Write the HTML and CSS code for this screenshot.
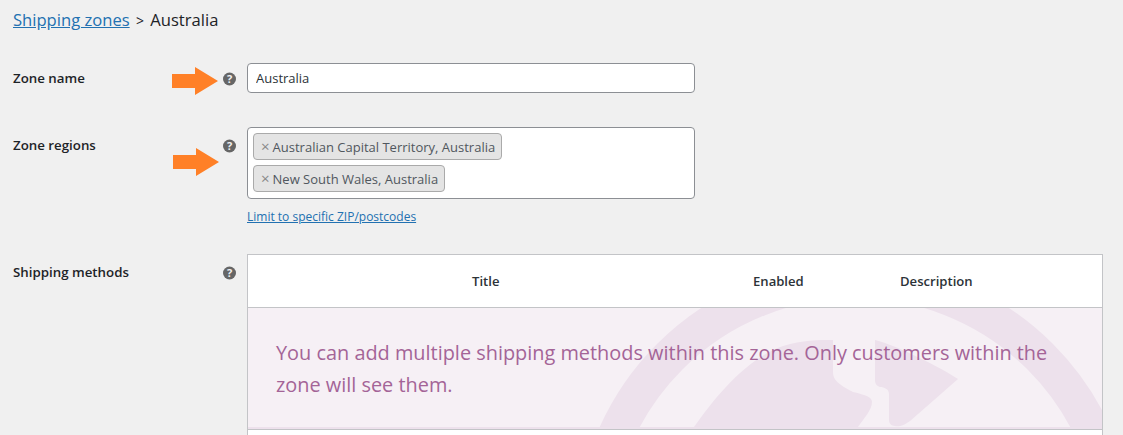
FILE: index.html
```html
<!DOCTYPE html>
<html lang="en">

<head>
  <meta charset="UTF-8">
  <title>Shipping zones</title>
  <link rel="stylesheet" href="styles.css">
</head>

<body>
  <h2 class="crumbs"><a href="#">Shipping zones</a> <span class="sep">&gt;</span> Australia</h2>

  <div class="field field-name">
    <div class="label">Zone name</div>
    <div class="tip">
      <svg class="arrow" viewBox="0 0 46 28"><path d="M0 7H23V0L46 14 23 28V21H0Z" /></svg>
      <svg class="help" viewBox="0 0 14 14"><circle cx="6.5" cy="7" r="6.5" /><text x="6.5" y="10.8" text-anchor="middle">?</text></svg>
    </div>
    <div class="control"><input class="text-input" type="text" value="Australia"></div>
  </div>

  <div class="field field-regions">
    <div class="label">Zone regions</div>
    <div class="tip">
      <svg class="arrow arrow-low" viewBox="0 0 46 28"><path d="M0 7H23V0L46 14 23 28V21H0Z" /></svg>
      <svg class="help" viewBox="0 0 14 14"><circle cx="6.5" cy="7" r="6.5" /><text x="6.5" y="10.8" text-anchor="middle">?</text></svg>
    </div>
    <div class="control">
      <div class="select-box">
        <span class="chip"><i>×</i>Australian Capital Territory, Australia</span>
        <span class="chip"><i>×</i>New South Wales, Australia</span>
      </div>
      <a class="limit" href="#">Limit to specific ZIP/postcodes</a>
    </div>
  </div>

  <div class="field field-methods">
    <div class="label">Shipping methods</div>
    <div class="tip">
      <svg class="help" viewBox="0 0 14 14"><circle cx="6.5" cy="7" r="6.5" /><text x="6.5" y="10.8" text-anchor="middle">?</text></svg>
    </div>
    <div class="methods">
      <div class="methods-head">
        <span class="col-title">Title</span>
        <span class="col-enabled">Enabled</span>
        <span class="col-desc">Description</span>
      </div>
      <div class="blank">
        <svg class="watermark" viewBox="0 0 854 119">
          <circle cx="607" cy="234" r="262" />
          <path class="fill" d="M446 119C470 85 500 50 535 38 555 32 570 32 585 32V64C585 72 590 76 605 84 618 87 624 89 624 94 624 102 616 110 610 119Z" />
          <path class="fill" d="M627 32C650 38 690 58 710 71L662 113C655 118 650 119 647 118 643 118 641 115 641 112V86C641 81 636 79 632 79 629 78 627 76 627 72Z" />
        </svg>
        <p>You can add multiple shipping methods within this zone. Only customers within the zone will see them.</p>
      </div>
      <div class="methods-foot"></div>
    </div>
  </div>
</body>

</html>
```

FILE: styles.css
```css
:root {
  --bg: #f0f0f0;
  --text: #1d2327;
  --link: #2271b1;
  --border: #c3c4c7;
  --input: #8c8f94;
  --woo: #a46497;
  --woo-mark: #ede1ec;
}

html, body {
  margin: 0;
  height: 435px;
  overflow: hidden;
}

body {
  padding: 0 0 0 13px;
  background: var(--bg);
  color: var(--text);
  font-family: "Open Sans", "Noto Sans", sans-serif;
  font-size: 13px;
}

a {
  color: var(--link);
}

.crumbs {
  margin: 0;
  padding-top: 9px;
  font-size: 16.6px;
  line-height: 22px;
  font-weight: 500;
}

.crumbs .sep {
  font-size: 14px;
  margin: 0 2px;
}

.field {
  display: grid;
  grid-template-columns: 210px 24px 1fr;
}

.field-name {
  margin-top: 31px;
}

.field-regions {
  margin-top: 34px;
}

.field-methods {
  margin-top: 29px;
}

.label {
  font-weight: 600;
  font-size: 13.3px;
  line-height: 18px;
  padding-top: 6px;
}

.field-regions .label,
.field-methods .label {
  padding-top: 9px;
}

.tip {
  position: relative;
  height: 14px;
  padding-top: 9px;
}

.field-regions .tip,
.field-methods .tip {
  padding-top: 12px;
}

.help {
  display: block;
  width: 14px;
  height: 14px;
}

.help circle {
  fill: #666;
}

.help text {
  fill: #f0f0f0;
  font-size: 11px;
  font-weight: 700;
  font-family: "Open Sans", sans-serif;
}

.arrow {
  position: absolute;
  left: -51px;
  top: 4px;
  width: 46px;
  height: 28px;
  fill: #ff8027;
}

.arrow-low {
  top: 21px;
  left: -50px;
}

.control {
  width: 448px;
}

.text-input {
  display: block;
  box-sizing: border-box;
  width: 100%;
  height: 30px;
  padding: 0 8px;
  border: 1px solid var(--input);
  border-radius: 4px;
  background: #fff;
  color: #2c3338;
  font: 13px "Open Sans", sans-serif;
}

.select-box {
  box-sizing: border-box;
  display: flex;
  flex-direction: column;
  align-items: flex-start;
  gap: 5px;
  height: 72px;
  padding: 5px;
  border: 1px solid var(--input);
  border-radius: 4px;
  background: #fff;
}

.chip {
  box-sizing: border-box;
  height: 27px;
  line-height: 25px;
  padding: 0 6px 0 7px;
  border: 1px solid #aaa;
  border-radius: 4px;
  background: #e4e4e4;
  color: #50575e;
  font-size: 13px;
  white-space: nowrap;
}

.chip i {
  font-style: normal;
  font-size: 15px;
  color: #888;
  margin-right: 3px;
}

.limit {
  display: inline-block;
  margin-top: 10px;
  font-size: 12px;
  line-height: 16px;
}

.methods {
  width: 856px;
  box-sizing: border-box;
  border: 1px solid var(--border);
  border-bottom: 0;
  background: #fff;
}

.methods-head {
  display: grid;
  grid-template-columns: 476px 150px 1fr;
  height: 52px;
  line-height: 52px;
  font-weight: 600;
  font-size: 13.1px;
  border-bottom: 1px solid var(--border);
  color: #2c3338;
}

.col-title {
  padding-left: 224px;
}

.col-enabled {
  padding-left: 29px;
}

.col-desc {
  padding-left: 26px;
}

.blank {
  position: relative;
  height: 121px;
  overflow: hidden;
  background: #f6f0f5;
  border-bottom: 1px solid var(--border);
  box-shadow: inset 0 -2px 0 var(--woo-mark);
}

.watermark {
  position: absolute;
  left: 0;
  top: 0;
  width: 854px;
  height: 119px;
}

.watermark circle {
  fill: none;
  stroke: var(--woo-mark);
  stroke-width: 36;
}

.watermark .fill {
  fill: var(--woo-mark);
}

.blank p {
  position: relative;
  margin: 0;
  padding: 29px 28px 0;
  color: var(--woo);
  font-size: 19.9px;
  line-height: 32px;
}

.methods-foot {
  height: 20px;
}
```
